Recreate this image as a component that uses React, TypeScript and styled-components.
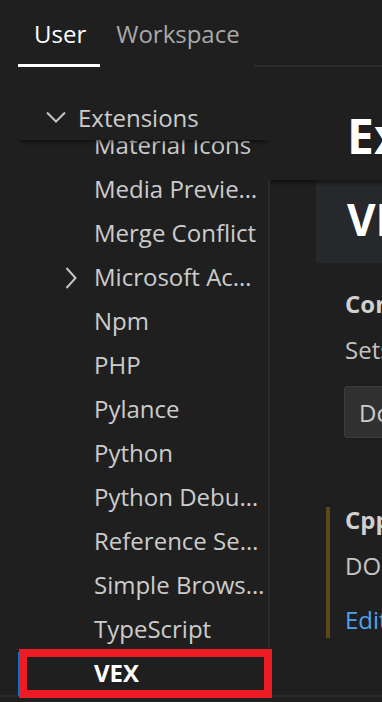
import styled, { createGlobalStyle } from "styled-components";

const GlobalStyle = createGlobalStyle`
  html, body {
    margin: 0;
    padding: 0;
    background: #1f1f1f;
  }
  body {
    font-family: "Segoe UI", "Open Sans", sans-serif;
    overflow: hidden;
  }
`;

const Page = styled.div`
  width: 382px;
  height: 702px;
  overflow: hidden;
  display: flex;
  flex-direction: column;
  background: #1f1f1f;
`;

const Content = styled.div`
  height: 695px;
  padding-left: 18px;
  display: flex;
  flex-direction: column;
`;

const BottomRule = styled.div`
  height: 2px;
  background: #2b2b2b;
`;

const TabBar = styled.div`
  height: 67px;
  display: flex;
  align-items: flex-end;
  flex-shrink: 0;
`;

const Tab = styled.div<{ $active?: boolean }>`
  height: 64px;
  box-sizing: border-box;
  padding: 0 14px 0 16px;
  display: flex;
  align-items: center;
  font-size: 24px;
  color: ${(p) => (p.$active ? "#ffffff" : "#a9a9a9")};
  border-bottom: 3px solid ${(p) => (p.$active ? "#ffffff" : "transparent")};
`;

const TabFiller = styled.div`
  flex: 1;
  border-bottom: 2px solid #2b2b2b;
`;

const Main = styled.div`
  flex: 1;
  display: flex;
  min-height: 0;
`;

const TreePane = styled.div`
  width: 250px;
  flex-shrink: 0;
  padding-top: 29px;
  position: relative;
`;

const StickyRow = styled.div`
  position: relative;
  z-index: 2;
  height: 44px;
  box-sizing: border-box;
  padding: 0 0 2px 28px;
  display: flex;
  align-items: center;
  gap: 12px;
  background: #1f1f1f;
  box-shadow: 0 4px 4px -2px rgba(0, 0, 0, 0.55);
  font-size: 24px;
  color: #cccccc;
`;

const List = styled.div`
  margin-top: -16px;
`;

const Row = styled.div<{ $selected?: boolean }>`
  position: relative;
  height: 44px;
  box-sizing: border-box;
  padding-bottom: 3px;
  display: flex;
  align-items: center;
  padding-left: ${(p) => (p.$selected ? "45px" : "47px")};
  font-size: 24px;
  white-space: nowrap;
  color: ${(p) => (p.$selected ? "#ffffff" : "#cccccc")};
  font-weight: ${(p) => (p.$selected ? 700 : 400)};
  border-left: ${(p) => (p.$selected ? "2px solid #0078d4" : "none")};

  ${(p) =>
    p.$selected &&
    `
    &::after {
      content: "";
      position: absolute;
      left: -1px;
      right: -4px;
      top: -3px;
      bottom: -2px;
      border: 8px solid #ed1c24;
      z-index: 5;
    }
  `}
`;

const Twistie = styled.span`
  width: 29px;
  flex-shrink: 0;
  display: flex;
  align-items: center;
  padding-top: 3px;
`;

const RowLabel = styled.span`
  overflow: hidden;
  text-overflow: ellipsis;
`;

const RightSide = styled.div`
  flex: 1;
  min-width: 0;
  display: flex;
  flex-direction: column;
  overflow: hidden;
`;

const TitleArea = styled.div`
  height: 113px;
  flex-shrink: 0;
  padding-left: 79px;
`;

const PageTitle = styled.div`
  margin-top: 45px;
  font-size: 48px;
  line-height: 48px;
  font-weight: 700;
  color: #ffffff;
  white-space: nowrap;
`;

const SettingsBody = styled.div`
  flex: 1;
  position: relative;
  border-left: 2px solid #2b2b2b;

  &::before {
    content: "";
    position: absolute;
    left: 0;
    right: 0;
    top: 0;
    height: 6px;
    background: linear-gradient(rgba(0, 0, 0, 0.45), rgba(0, 0, 0, 0));
    z-index: 1;
  }
`;

const GroupBand = styled.div`
  margin-left: 46px;
  height: 83px;
  box-sizing: border-box;
  padding: 17px 0 0 31px;
  background: #26282b;
`;

const GroupTitle = styled.div`
  font-size: 44px;
  line-height: 44px;
  font-weight: 700;
  color: #ffffff;
  white-space: nowrap;
`;

const SettingList = styled.div`
  padding-left: 75px;
  padding-top: 28px;
  display: flex;
  flex-direction: column;
  gap: 64px;
`;

const Setting = styled.div<{ $modified?: boolean }>`
  margin-left: -19px;
  padding-left: 15px;
  padding-bottom: 5px;
  border-left: 4px solid ${(p) => (p.$modified ? "#5e4719" : "transparent")};
  white-space: nowrap;
`;

const SettingTitle = styled.div`
  font-size: 24px;
  line-height: 26px;
  font-weight: 700;
  color: #d0d0d0;
`;

const SettingDesc = styled.div`
  margin-top: 20px;
  font-size: 24px;
  line-height: 26px;
  color: #c4c4c4;
`;

const Dropdown = styled.div`
  margin-top: 23px;
  margin-left: -1px;
  width: 300px;
  height: 52px;
  box-sizing: border-box;
  padding-left: 14px;
  display: flex;
  align-items: center;
  background: #313131;
  border: 1px solid #3c3c3c;
  border-radius: 3px;
  font-size: 24px;
  color: #cccccc;
`;

const SettingLink = styled.div`
  margin-top: 28px;
  font-size: 24px;
  line-height: 26px;
  color: #4da3f0;
`;

const ChevronDown = () => (
  <svg width="20" height="12" viewBox="0 0 20 12">
    <polyline points="1,1.5 10,10.5 19,1.5" fill="none" stroke="#c5c5c5" strokeWidth="2" />
  </svg>
);

const ChevronRight = () => (
  <svg width="12" height="22" viewBox="0 0 12 22">
    <polyline points="1.5,1 10.5,11 1.5,21" fill="none" stroke="#c5c5c5" strokeWidth="2" />
  </svg>
);

const extensions = [
  { label: "Material Icons" },
  { label: "Media Previe…" },
  { label: "Merge Conflict" },
  { label: "Microsoft Ac…", collapsed: true },
  { label: "Npm" },
  { label: "PHP" },
  { label: "Pylance" },
  { label: "Python" },
  { label: "Python Debu…" },
  { label: "Reference Se…" },
  { label: "Simple Brows…" },
  { label: "TypeScript" },
  { label: "VEX", selected: true },
];

export default function App() {
  return (
    <>
      <GlobalStyle />
      <Page>
        <Content>
          <TabBar>
            <Tab $active>User</Tab>
            <Tab>Workspace</Tab>
            <TabFiller />
          </TabBar>
          <Main>
            <TreePane>
              <StickyRow>
                <ChevronDown />
                <span>Extensions</span>
              </StickyRow>
              <List>
                {extensions.map((ext) => (
                  <Row key={ext.label} $selected={ext.selected}>
                    <Twistie>{ext.collapsed && <ChevronRight />}</Twistie>
                    <RowLabel>{ext.label}</RowLabel>
                  </Row>
                ))}
              </List>
            </TreePane>
            <RightSide>
              <TitleArea>
                <PageTitle>Extensions</PageTitle>
              </TitleArea>
              <SettingsBody>
                <GroupBand>
                  <GroupTitle>VEX</GroupTitle>
                </GroupBand>
                <SettingList>
                  <Setting>
                    <SettingTitle>Controller Port</SettingTitle>
                    <SettingDesc>Sets the default port</SettingDesc>
                    <Dropdown>Download</Dropdown>
                  </Setting>
                  <Setting $modified>
                    <SettingTitle>Cpp Toolchain Path</SettingTitle>
                    <SettingDesc>DO NOT EDIT</SettingDesc>
                    <SettingLink>Edit in settings.json</SettingLink>
                  </Setting>
                </SettingList>
              </SettingsBody>
            </RightSide>
          </Main>
        </Content>
        <BottomRule />
      </Page>
    </>
  );
}
